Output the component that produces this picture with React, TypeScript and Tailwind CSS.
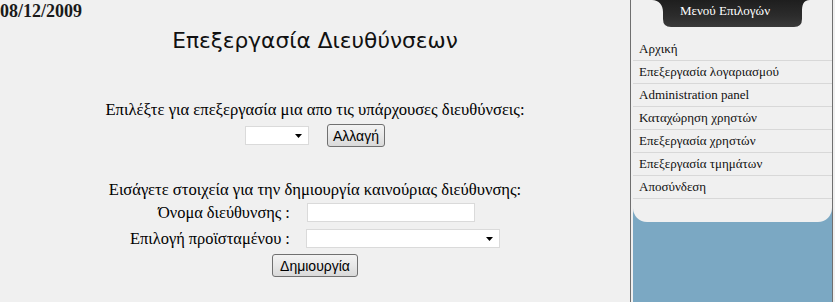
import React from 'react'

const menuItems = [
  'Αρχική',
  'Επεξεργασία λογαριασμού',
  'Administration panel',
  'Καταχώρηση χρηστών',
  'Επεξεργασία χρηστών',
  'Επεξεργασία τμημάτων',
  'Αποσύνδεση',
]

const serif = "font-['Liberation_Serif','Times_New_Roman',serif]"

function SelectBox({ width }: { width: string }) {
  return (
    <div className={`relative h-[19px] ${width}`}>
      <select className="h-full w-full appearance-none border border-[#dadada] bg-white outline-none" />
      <svg
        className="pointer-events-none absolute right-[7px] top-[8px]"
        width="7"
        height="4"
        viewBox="0 0 7 4"
      >
        <path d="M0 0H7L3.5 4Z" fill="#000" />
      </svg>
    </div>
  )
}

function Button({ label, className = '' }: { label: string; className?: string }) {
  return (
    <button
      className={`h-[23px] rounded-[3px] border border-[#707070] bg-gradient-to-b from-[#f3f3f3] via-[#e8e8e8] to-[#d9d9d9] px-[3px] font-['Liberation_Sans',Arial,sans-serif] text-[14px] leading-none text-black ${className}`}
    >
      {label}
    </button>
  )
}

function MenuTab() {
  return (
    <div className="relative ml-[19px] flex h-[27px] w-[158px] justify-center">
      <svg className="absolute inset-0" width="158" height="27" viewBox="0 0 158 27">
        <defs>
          <linearGradient id="tab" x1="0" y1="0" x2="0" y2="1">
            <stop offset="0" stopColor="#1e1e1e" />
            <stop offset="0.6" stopColor="#2c2c2c" />
            <stop offset="1" stopColor="#3a3a3a" />
          </linearGradient>
        </defs>
        <path
          d="M0 0H158C151 0 150 5 150 12V19Q150 27 142 27H19Q11 27 11 19V12C11 5 7 0 0 0Z"
          fill="url(#tab)"
        />
      </svg>
      <span className={`relative mr-[12px] pt-[3px] text-[13px] leading-[15px] text-white ${serif}`}>
        Μενού Επιλογών
      </span>
    </div>
  )
}

export default function App() {
  return (
    <div className="flex h-[302px] w-[835px] overflow-hidden bg-[#f0f0f0] text-black">
      <main className="w-[630px]">
        <div className={`mt-[1px] text-[18px] font-bold leading-[20px] text-[#1a1a1a] ${serif}`}>
          08/12/2009
        </div>
        <h1 className="mt-[6px] text-center font-['DejaVu_Sans',Verdana,sans-serif] text-[21.7px] leading-[28px] text-[#111]">
          Επεξεργασία Διευθύνσεων
        </h1>

        <p className={`mt-[45px] text-center text-[16.6px] leading-[20px] ${serif}`}>
          Επιλέξτε για επεξεργασία μια απο τις υπάρχουσες διευθύνσεις:
        </p>
        <div className="mt-[4px] flex items-center justify-center gap-[18px]">
          <SelectBox width="w-[64px]" />
          <Button label="Αλλαγή" className="w-[58px]" />
        </div>

        <p className={`mt-[33px] text-center text-[16.6px] leading-[20px] ${serif}`}>
          Εισάγετε στοιχεία για την δημιουργία καινούριας διεύθυνσης:
        </p>
        <div className={`mt-[3px] grid grid-cols-[auto_auto] justify-center gap-x-[16px] gap-y-[7px] text-[16.4px] ${serif}`}>
          <label className="self-center text-right leading-[19px]">Όνομα διεύθυνσης :</label>
          <input className="ml-[1px] h-[19px] w-[168px] border border-[#dadada] bg-white outline-none" />
          <label className="self-center text-right leading-[19px]">Επιλογή προϊσταμένου :</label>
          <SelectBox width="w-[194px]" />
          <div className="col-span-2 -mt-[1px] flex justify-center">
            <Button label="Δημιουργία" className="w-[86px]" />
          </div>
        </div>
      </main>

      <aside className="flex w-[203px] border-x border-[#6f6f6f] pl-[2px]">
        <div className="flex-1 bg-[#7ba8c3]">
          <div className="h-[222px] rounded-b-[14px] bg-[#f0f0f0]">
            <MenuTab />
            <ul className={`mt-[11px] text-[13px] text-[#111] ${serif}`}>
              {menuItems.map((item) => (
                <li key={item} className="h-[23px] border-b border-[#d8d8d8] pl-[6px] leading-[22px]">
                  {item}
                </li>
              ))}
            </ul>
          </div>
        </div>
      </aside>
    </div>
  )
}
